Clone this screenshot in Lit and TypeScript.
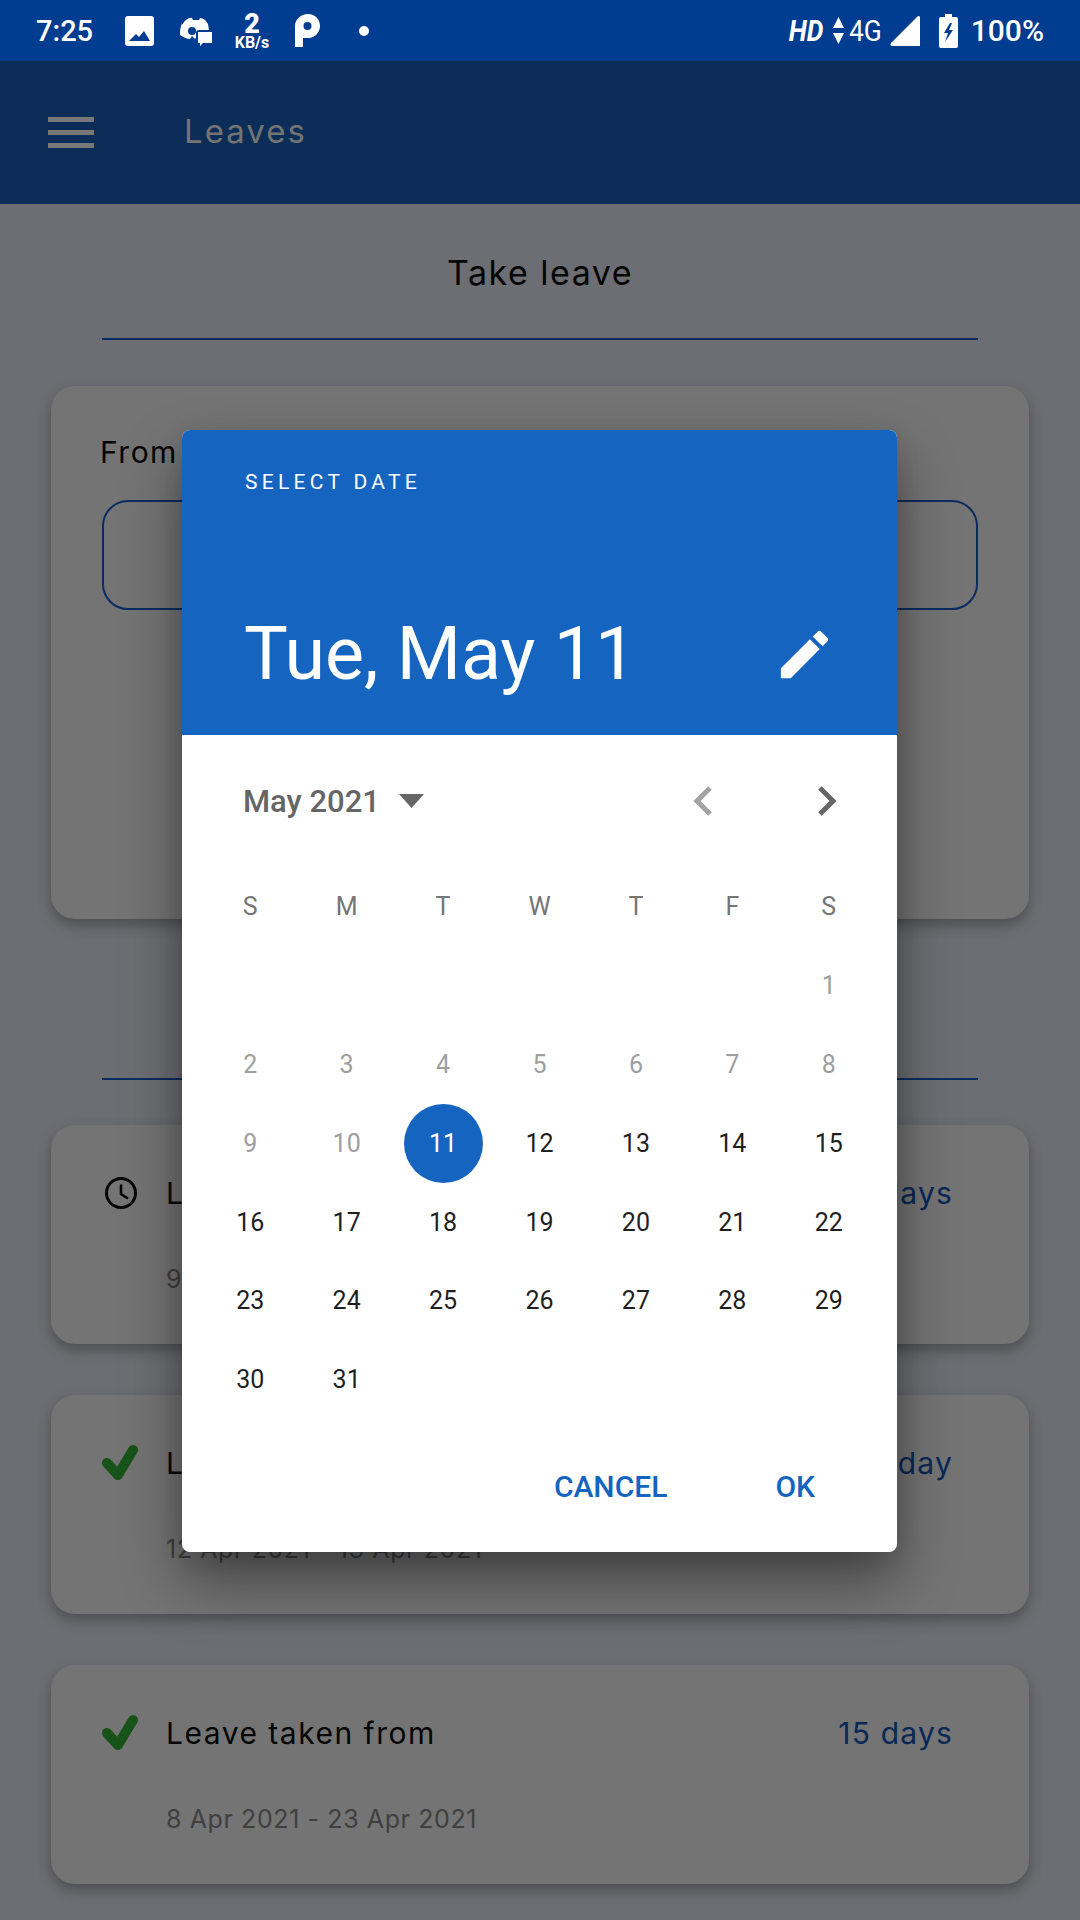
import { LitElement, html, css, svg } from "lit";
import { customElement } from "lit/decorators.js";

const weekdays = ["S", "M", "T", "W", "T", "F", "S"];
const blanks = [0, 0, 0, 0, 0, 0];
const days = Array.from({ length: 31 }, (_, i) => i + 1);

const check = svg`<path d="M5 19l11 12L31 6" fill="none" stroke="#175218" stroke-width="10" stroke-linecap="round" stroke-linejoin="round"/>`;

@customElement("app-root")
export class AppRoot extends LitElement {
  static styles = css`
    :host {
      display: block;
      position: relative;
      width: 1080px;
      height: 1920px;
      overflow: hidden;
      background: #6d6e73;
      font-family: Inter, Lato, sans-serif;
    }
    svg { display: block; }

    .status {
      height: 61px;
      background: #003c8f;
      color: #fff;
      display: flex;
      align-items: center;
      padding: 0 36px;
      font-family: Roboto, sans-serif;
      font-size: 29px;
    }
    .status .time { width: 58px; font-weight: 500; margin-right: 31px; }
    .speed { width: 36px; margin: 0 25px 0 22px; text-align: center; font-weight: 700; line-height: 1; }
    .speed b { display: block; font-size: 27px; line-height: 22px; margin-top: 1px; }
    .speed span { display: block; font-size: 16px; line-height: 15px; margin-left: -2px; margin-right: -2px; }
    .dot { width: 10px; height: 10px; border-radius: 50%; background: #fff; margin-left: 39px; }
    .spacer { flex: 1; }
    .hd { font-style: italic; font-weight: 700; font-size: 30px; margin-right: 9px; transform: scaleX(0.88); transform-origin: right; }
    .net { font-size: 30px; margin: 0 9px 0 5px; width: 32px; display: block; transform: scaleX(0.88); transform-origin: left; }
    .pct { font-weight: 500; margin-left: 13px; white-space: nowrap; font-size: 30px; }

    .appbar {
      height: 143px;
      background: #0b2d58;
      display: flex;
      align-items: center;
      padding-left: 48px;
      padding-bottom: 4px;
      color: #747474;
      font-size: 33px;
      letter-spacing: 2px;
      box-sizing: border-box;
    }
    .burger { width: 46px; display: flex; flex-direction: column; gap: 8px; margin-right: 90px; margin-top: 3px; }
    .burger i { height: 5px; background: #787878; }

    .page { padding: 0 51px; }
    h1 {
      margin: 0;
      padding: 48px 0 0;
      height: 69px;
      text-align: center;
      font-size: 34px;
      line-height: 42px;
      letter-spacing: 1.500px;
      font-weight: 400;
      color: #050505;
    }
    .rule { height: 2px; background: #0a2c60; margin: 0 102px; }
    .rule.top { margin-top: 17px; margin-bottom: 46px; }
    .rule.second { margin-top: 159px; margin-bottom: 45px; }

    .card {
      background: #747474;
      border-radius: 24px;
      box-shadow: 0 6px 14px rgba(0, 0, 0, 0.3);
      box-sizing: border-box;
    }
    .form { height: 533px; padding: 47px 51px; }
    .form label { display: block; font-size: 30px; line-height: 38px; letter-spacing: 1.500px; margin-left: -2px; color: #050505; }
    .field { height: 110px; margin-top: 29px; border: 2px solid #0a2c60; border-radius: 26px; box-sizing: border-box; }

    .leave { height: 219px; margin-bottom: 51px; padding: 48px 76px 0 51px; }
    .leave .row { display: flex; align-items: center; height: 40px; }
    .leave .icon { width: 64px; flex: none; }
    .leave .title { flex: 1; font-size: 30px; letter-spacing: 1.500px; color: #050505; }
    .leave .count { font-size: 30px; letter-spacing: 1.200px; color: #0a2856; }
    .leave .range { margin: 50px 0 0 64px; font-size: 25px; letter-spacing: 0.600px; line-height: 32px; color: #3f3f3f; }

    .dialog {
      position: absolute;
      left: 182px;
      top: 430px;
      width: 715px;
      height: 1122px;
      background: #fff;
      border-radius: 8px;
      overflow: hidden;
      font-family: Roboto, sans-serif;
    }
    .dialog-shadow {
      position: absolute;
      left: 182px;
      top: 430px;
      width: 715px;
      height: 1122px;
      border-radius: 8px;
      box-shadow: 0 30px 60px rgba(0, 0, 0, 0.4), 0 10px 24px rgba(0, 0, 0, 0.12);
    }
    .head {
      height: 305px;
      background: #1565c0;
      color: #fff;
      padding: 40px 63px 0;
      box-sizing: border-box;
      position: relative;
    }
    .head .label { font-size: 21px; line-height: 24px; letter-spacing: 4.300px; }
    .head .date-row { display: flex; align-items: center; justify-content: space-between; margin-top: 118px; }
    .head .date { font-size: 73.600px; line-height: 84px; margin-left: -1px; }
    .nav { height: 132px; display: flex; align-items: center; padding: 0 59px 0 61px; color: #666; }
    .nav .month { font-size: 31px; font-weight: 500; margin-right: 19px; }
    .nav .arrows { margin-left: auto; display: flex; gap: 106px; }
    .grid {
      margin-left: 20px;
      width: 675px;
      display: grid;
      grid-template-columns: repeat(7, 1fr);
      grid-auto-rows: 78.900px;
      align-items: center;
      justify-items: center;
      font-size: 25px;
      color: #1f1f1f;
    }
    .grid .wd { color: #757575; }
    .grid .off { color: #9e9e9e; }
    .grid .sel {
      width: 79px;
      height: 79px;
      line-height: 79px;
      text-align: center;
      border-radius: 50%;
      background: #1565c0;
      color: #fff;
    }
    .actions {
      height: 134px;
      display: flex;
      align-items: center;
      justify-content: flex-end;
      gap: 108px;
      padding-right: 82px;
      color: #1565c0;
      font-size: 30px;
      font-weight: 500;
    }
  `;

  leaveCard(icon: unknown, count: string, range: string) {
    return html`
      <div class="card leave">
        <div class="row">
          <div class="icon">${icon}</div>
          <div class="title">Leave taken from</div>
          <div class="count">${count}</div>
        </div>
        <div class="range">${range}</div>
      </div>
    `;
  }

  render() {
    const clock = html`<svg width="38" height="38" viewBox="0 0 38 38"><circle cx="19" cy="19" r="14.5" fill="none" stroke="#050505" stroke-width="3"/><path d="M19 10.500v9.500l7 4.500" fill="none" stroke="#050505" stroke-width="2.600"/></svg>`;
    const done = html`<svg width="38" height="38" viewBox="0 0 38 38">${check}</svg>`;

    return html`
      <div class="status">
        <span class="time">7:25</span>
        <svg width="29" height="30" viewBox="0 0 29 30"><path fill-rule="evenodd" fill="#fff" d="M3 0h23a3 3 0 0 1 3 3v24a3 3 0 0 1-3 3H3a3 3 0 0 1-3-3V3a3 3 0 0 1 3-3zM4 25h21l-6-10-5 6-3-3z" /></svg>
        <svg width="32" height="30" viewBox="0 0 32 30" style="margin-left:26px"><path fill="#fff" fill-rule="evenodd" d="M2 9C5 4 9 1 12 2l1 2h6l1-2c3 0 6 2 8 6l1 6H19c-2 0-3 1-3 3v5l-1 1-3-3-2 3c-3 0-7-2-10-4 0-4 0-7 2-12zM12 11a4 4 0 1 0 0 8 4 4 0 0 0 0-8z"/><path fill="#fff" d="M18 16h14v11h-9l-3 3v-3h-2z"/></svg>
        <div class="speed"><b>2</b><span>KB/s</span></div>
        <svg width="25" height="33" viewBox="0 0 25 33"><path fill="#fff" fill-rule="evenodd" d="M0 12C0 5 6 0 13 0s12 5 12 12-6 12-11 12H8v9H0zM12.500 8a4 4 0 1 0 0 8 4 4 0 0 0 0-8z"/></svg>
        <i class="dot"></i>
        <span class="spacer"></span>
        <span class="hd">HD</span>
        <svg width="11" height="27" viewBox="0 0 11 27"><path fill="#fff" d="M5.500 0L11 11H0zM0 16h11L5.500 27z"/></svg>
        <span class="net">4G</span>
        <svg width="30" height="31" viewBox="0 0 30 31"><path fill="#fff" d="M28 1a2 2 0 0 1 2 1v29H2a2 2 0 0 1-1-3z"/></svg>
        <svg width="19" height="34" viewBox="0 0 19 34" style="margin-left:19px"><path fill="#fff" fill-rule="evenodd" d="M6 0h7v3h4a2 2 0 0 1 2 2v27a2 2 0 0 1-2 2H2a2 2 0 0 1-2-2V5a2 2 0 0 1 2-2h4zM11 9l-6 10h4l-3 9 8-12h-4l3-7z"/></svg>
        <span class="pct">100%</span>
      </div>

      <div class="appbar">
        <div class="burger"><i></i><i></i><i></i></div>
        <span>Leaves</span>
      </div>

      <h1>Take leave</h1>
      <div class="rule top"></div>
      <div class="page">
        <div class="card form">
          <label>From date</label>
          <div class="field"></div>
        </div>
      </div>
      <div class="rule second"></div>
      <div class="page">
        ${this.leaveCard(clock, "5 days", "9 May 2021 - 14 May 2021")}
        ${this.leaveCard(done, "1 day", "12 Apr 2021 - 13 Apr 2021")}
        ${this.leaveCard(done, "15 days", "8 Apr 2021 - 23 Apr 2021")}
      </div>

      <div class="dialog-shadow"></div>
      <div class="dialog">
        <div class="head">
          <div class="label">SELECT DATE</div>
          <div class="date-row">
            <div class="date">Tue, May 11</div>
            <svg width="63" height="63" viewBox="0 0 24 24" style="margin-right:-2px"><path fill="#fff" d="M3 17.25V21h3.75L17.810 9.940l-3.750-3.750L3 17.250zM20.710 7.040c.39-.39.39-1.020 0-1.410l-2.340-2.340c-.39-.39-1.020-.39-1.410 0l-1.830 1.830 3.750 3.750 1.830-1.830z"/></svg>
          </div>
        </div>
        <div class="nav">
          <span class="month">May 2021</span>
          <svg width="25" height="14" viewBox="0 0 25 14"><path fill="#666" d="M0 0h25L12.500 14z"/></svg>
          <div class="arrows">
            <svg width="20" height="30" viewBox="0 0 20 30"><path d="M18 2L5 15l13 13" fill="none" stroke="#a3a3a3" stroke-width="5"/></svg>
            <svg width="20" height="30" viewBox="0 0 20 30"><path d="M2 2l13 13L2 28" fill="none" stroke="#666" stroke-width="5"/></svg>
          </div>
        </div>
        <div class="grid">
          ${weekdays.map((d) => html`<span class="wd">${d}</span>`)}
          ${blanks.map(() => html`<span></span>`)}
          ${days.map(
            (d) => html`<span class="${d === 11 ? "sel" : d < 11 ? "off" : ""}">${d}</span>`
          )}
        </div>
        <div class="actions">
          <span>CANCEL</span>
          <span>OK</span>
        </div>
      </div>
    `;
  }
}
